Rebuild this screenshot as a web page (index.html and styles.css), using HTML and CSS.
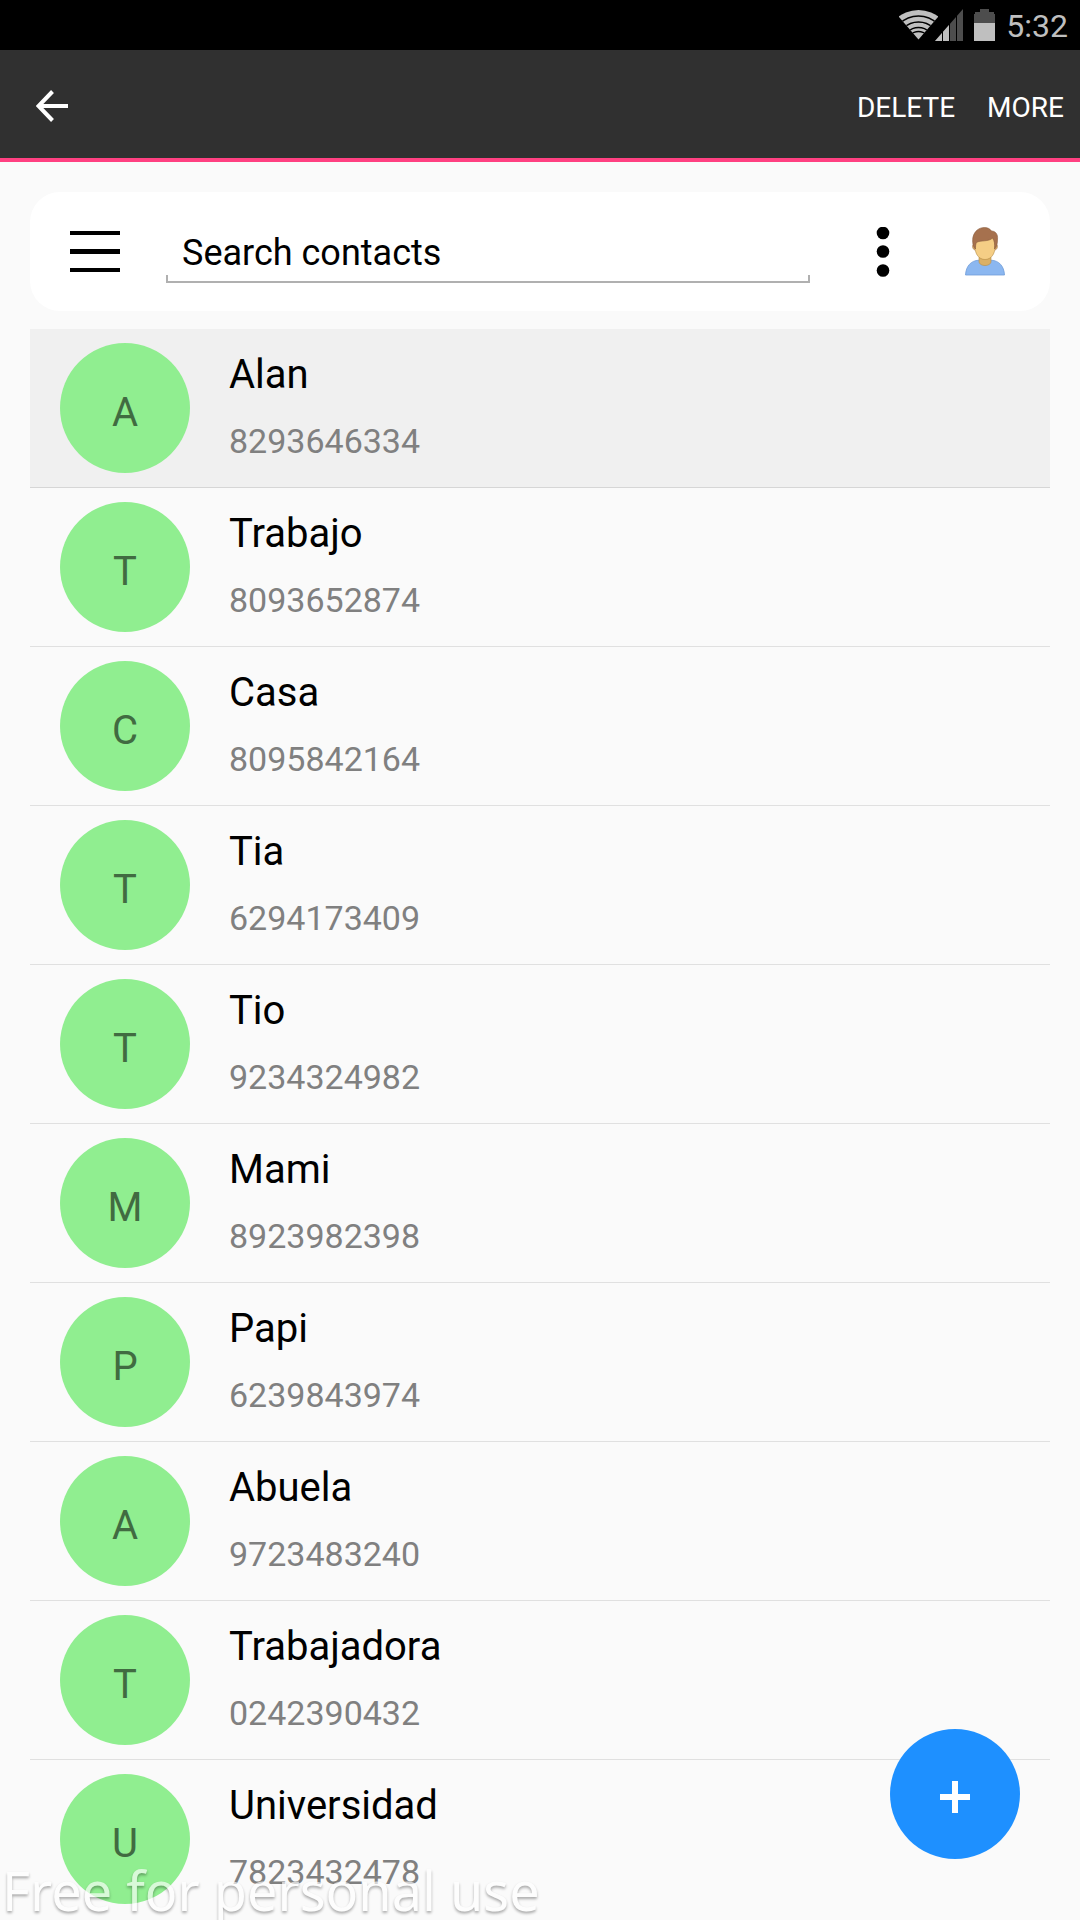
FILE: index.html
```html
<!DOCTYPE html>
<html lang="en">
<head>
<meta charset="utf-8">
<meta name="viewport" content="width=device-width, initial-scale=1">
<title>Contacts</title>
<link rel="stylesheet" href="styles.css">
</head>
<body>
<div class="status-bar">
  <div class="signals">
    <svg width="39" height="30" viewBox="0 0 39 30" aria-hidden="true">
      <clipPath id="fan"><path d="M19.500 29.500L-6 0H45Z"/></clipPath>
      <g clip-path="url(#fan)">
        <circle cx="19.500" cy="33" r="33" fill="#bfbfbf"/>
        <g fill="none" stroke="#000" stroke-width="1.400"><circle cx="19.500" cy="33" r="27"/><circle cx="19.500" cy="33" r="21"/><circle cx="19.500" cy="33" r="15.500"/><circle cx="19.500" cy="33" r="11.500"/></g>
      </g>
    </svg>
    <svg class="cell" width="28" height="32" viewBox="0 0 28 32" aria-hidden="true">
      <path d="M0 32L28 0V32Z" fill="#4d4d4d"/>
      <path d="M0 32L14 16V32Z" fill="#bfbfbf"/>
      <path d="M7.500 0V32M14.500 0V32M21.500 0V32" stroke="#000"/>
    </svg>
  </div>
  <svg class="battery" width="21" height="32" viewBox="0 0 21 32" aria-hidden="true">
    <path d="M6 0H15V3H20V5H21V14H0V5H1V3H6Z" fill="#4d4d4d"/>
    <path d="M0 14H21V32H0Z" fill="#bfbfbf"/>
  </svg>
  <time class="clock">5:32</time>
</div>

<header class="toolbar">
  <button class="icon-button" type="button" aria-label="Back">
    <svg width="32" height="32" viewBox="0 0 32 32"><path d="M16.500 1.500L2.500 16L16.500 30.500M3 16H32" fill="none" stroke="#fff" stroke-width="4"/></svg>
  </button>
  <div class="actions">
    <button class="action" type="button">DELETE</button>
    <button class="action" type="button">MORE</button>
  </div>
</header>

<main class="content">
  <form class="search-card" role="search">
    <button class="icon-button" type="button" aria-label="Menu">
      <svg width="50" height="42" viewBox="0 0 50 42"><path d="M0 0H50V4H0ZM0 18H50V23H0ZM0 37H50V41H0Z"/></svg>
    </button>
    <div class="search-field">
      <input class="search-input" type="text" aria-label="Search contacts" placeholder="Search contacts">
    </div>
    <button class="icon-button" type="button" aria-label="Options">
      <svg width="14" height="50" viewBox="0 0 14 50"><circle cx="7" cy="6" r="6.300"/><circle cx="7" cy="24.500" r="6.300"/><circle cx="7" cy="43.500" r="6.300"/></svg>
    </button>
    <button class="icon-button" type="button" aria-label="Profile">
      <svg width="40" height="49" viewBox="0 0 40 49">
        <path d="M.5 48C1 39 6 33.500 14 33.200H26C34 33.500 39 39 39.500 48Z" fill="#8bb7f0" stroke="#6f9cd8" stroke-width=".8"/>
        <path d="M14 30H26V34.500C26 37 23 38.500 20 38.500S14 37 14 34.500Z" fill="#dbb065" stroke="#b58d45" stroke-width=".6"/>
        <path d="M9 17C6.500 18 7.500 23 10.500 23M31 17C33.500 18 32.500 23 29.500 23" fill="#dbb065" stroke="#a16a4a" stroke-width=".6"/>
        <path d="M10 14C14 10 25 8 30 11V20C30 27 26 32.500 20 32.500S10 27 10 20Z" fill="#f5ce85" stroke="#b58d45" stroke-width=".6"/>
        <path d="M10.500 22C7 19 7.500 12 8 10C9.500 4 14 .5 19.500 .5C23 .5 25 2 26.500 4C31 4 33 8 32.500 12C32.500 16 32 20 29.500 22C30 17 29.500 14 27.500 11C24 15 15 13 11.500 15.500C10.500 17 10.500 20 10.500 22Z" fill="#a6714e" stroke="#8a5a3c" stroke-width=".6"/>
      </svg>
    </button>
  </form>

  <ul class="contacts">
    <li class="contact selected"><span class="avatar">A</span><div class="details"><span class="name">Alan</span><span class="phone">8293646334</span></div></li>
    <li class="contact"><span class="avatar">T</span><div class="details"><span class="name">Trabajo</span><span class="phone">8093652874</span></div></li>
    <li class="contact"><span class="avatar">C</span><div class="details"><span class="name">Casa</span><span class="phone">8095842164</span></div></li>
    <li class="contact"><span class="avatar">T</span><div class="details"><span class="name">Tia</span><span class="phone">6294173409</span></div></li>
    <li class="contact"><span class="avatar">T</span><div class="details"><span class="name">Tio</span><span class="phone">9234324982</span></div></li>
    <li class="contact"><span class="avatar">M</span><div class="details"><span class="name">Mami</span><span class="phone">8923982398</span></div></li>
    <li class="contact"><span class="avatar">P</span><div class="details"><span class="name">Papi</span><span class="phone">6239843974</span></div></li>
    <li class="contact"><span class="avatar">A</span><div class="details"><span class="name">Abuela</span><span class="phone">9723483240</span></div></li>
    <li class="contact"><span class="avatar">T</span><div class="details"><span class="name">Trabajadora</span><span class="phone">0242390432</span></div></li>
    <li class="contact"><span class="avatar">U</span><div class="details"><span class="name">Universidad</span><span class="phone">7823432478</span></div></li>
  </ul>
</main>

<button class="add-button" type="button" aria-label="Add contact">
  <svg width="30" height="32" viewBox="0 0 30 32"><path d="M12 0H18V13H30V19H18V32H12V19H0V13H12Z" fill="#fff"/></svg>
</button>
<div class="watermark">Free for personal use</div>
</body>
</html>
```
FILE: styles.css
```css
* {
  box-sizing: border-box;
}

body {
  margin: 0;
  background: #fafafa;
  color: #000;
  font-family: Roboto, "Noto Sans", sans-serif;
}

svg {
  display: block;
}

button {
  border: 0;
  padding: 0;
  background: none;
  color: inherit;
  font: inherit;
}

.status-bar {
  display: flex;
  align-items: center;
  justify-content: flex-end;
  height: 50px;
  padding: 0 12px;
  background: #000;
}

.signals {
  display: flex;
  align-items: center;
}

.cell {
  margin-left: -3px;
}

.battery {
  margin: 0 11px;
}

.clock {
  color: #bfbfbf;
  font-size: 32px;
  line-height: 40px;
  padding-top: 2px;
}

.toolbar {
  display: flex;
  align-items: center;
  justify-content: space-between;
  height: 112px;
  padding: 4px 16px 0 36px;
  border-bottom: 4px solid #ff4081;
  background: #303030;
  color: #fff;
}

.actions {
  display: flex;
  gap: 32px;
}

.action {
  font-size: 28px;
  line-height: 32px;
  padding-top: 4px;
}

.content {
  padding: 30px 30px 0;
}

.search-card {
  display: flex;
  align-items: center;
  height: 119px;
  margin-bottom: 18px;
  padding: 0 45px 0 40px;
  border-radius: 30px;
  background: #fff;
}

/* Underline with short upturned ends, as on the classic text field. */
.search-field {
  flex: 1;
  margin: 0 66px 0 46px;
  padding: 0 2px 2px;
  background:
    linear-gradient(#b0b0b0, #b0b0b0) left bottom / 100% 2px no-repeat,
    linear-gradient(#b0b0b0, #b0b0b0) left bottom / 2px 8px no-repeat,
    linear-gradient(#b0b0b0, #b0b0b0) right bottom / 2px 8px no-repeat;
}

.search-input {
  display: block;
  width: 100%;
  height: 60px;
  padding: 4px 14px 0;
  border: 0;
  outline: 0;
  background: none;
  color: #000;
  font: 36px/44px Roboto, "Noto Sans", sans-serif;
}

.search-input::placeholder {
  color: #000;
  opacity: 1;
}

.search-card .icon-button:last-child {
  margin-left: 75px;
}

.contacts {
  margin: 0;
  padding: 0;
  list-style: none;
}

.contact {
  display: flex;
  align-items: flex-start;
  gap: 39px;
  padding: 14px 30px;
  border-bottom: 1px solid #e0e0e0;
}

.contact:last-child {
  border-bottom: 0;
}

.selected {
  border-color: #d6d6d6;
  background: #f0f0f0;
}

.avatar {
  display: flex;
  flex: none;
  align-items: center;
  justify-content: center;
  width: 130px;
  height: 130px;
  padding-top: 10px;
  border-radius: 50%;
  background: #90ee90;
  color: #416b41;
  font-size: 40px;
  line-height: 48px;
}

.details {
  display: flex;
  flex-direction: column;
  gap: 22px;
  padding-top: 8px;
}

.name {
  font-size: 40px;
  line-height: 48px;
}

.phone {
  color: #808080;
  font-size: 34px;
  line-height: 40px;
}

.add-button {
  position: fixed;
  right: 60px;
  bottom: 61px;
  display: flex;
  align-items: center;
  justify-content: center;
  width: 130px;
  height: 130px;
  padding-top: 6px;
  border-radius: 50%;
  background: #1e90ff;
}

/* Opacity on the whole block keeps the shadow from showing through the letters. */
.watermark {
  position: fixed;
  left: 2px;
  bottom: 0;
  color: #fff;
  font: 54px/60px "Noto Sans", sans-serif;
  text-shadow: 0 2px 3px rgba(0, 0, 0, 0.5);
  opacity: 0.65;
  white-space: nowrap;
  pointer-events: none;
}
```
